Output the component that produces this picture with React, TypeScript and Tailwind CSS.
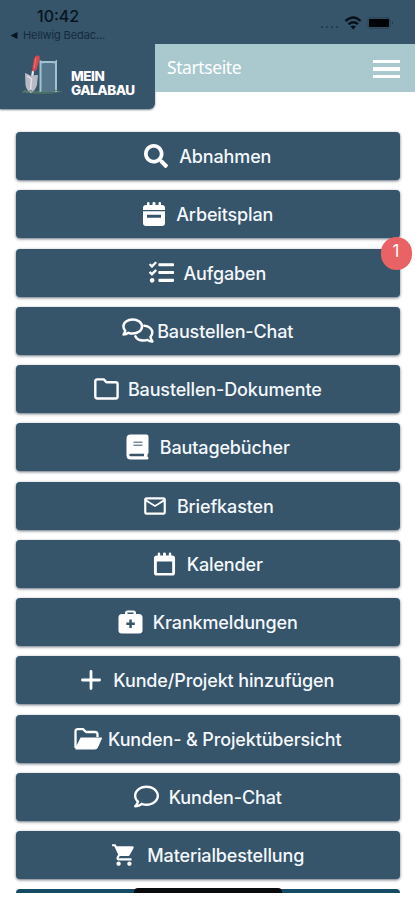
import type { ReactNode } from "react";
import { FaSearch, FaTasks, FaRegComment } from "react-icons/fa";
import { MdMailOutline, MdShoppingCart } from "react-icons/md";

type Row = { label: string; icon: ReactNode; gap: string; badge?: number };

function CalendarIcon({ event = false }: { event?: boolean }) {
  return (
    <svg viewBox="0 0 24 26" className={event ? "h-[26px] w-6" : "h-[26px] w-[23px]"} fill="currentColor">
      <path d="M5 2q0-1 1.200-1T7.500 2v2h3V2q0-1 1.500-1t1.500 1v2h3V2q0-1 1.300-1T19 2v2h1q3 0 3 3v2H1V7q0-3 3-3h1z" />
      {event ? (
        <path fillRule="evenodd" d="M1 10.200h22V22q0 3-3 3H4q-3 0-3-3zM5 13.800v3h14v-3z" />
      ) : (
        <path fillRule="evenodd" d="M1 8h22v14q0 3-3 3H4q-3 0-3-3zM4 10.300v12h16v-12z" />
      )}
    </svg>
  );
}

function ChatsIcon() {
  return (
    <svg viewBox="0 0 32 26" className="h-[26px] w-8" fill="none" stroke="currentColor" strokeWidth="2.500" strokeLinejoin="round" strokeLinecap="round">
      <path d="M3.200 12.600C1.900 11.200 1.400 9.900 1.400 8.500c0-3.900 4.100-7 9.300-7s9.300 3.100 9.300 7-4.200 7.100-9.300 7.100c-1.600 0-3-.3-4.200-.8-1.500 1.100-3.100 1.700-4.900 1.700.9-1.200 1.500-2.400 1.600-3.900z" />
      <path d="M22.300 7.800c4.600.2 8 3 8 6.800 0 1.700-.6 3-1.800 4.200.2 1.700.9 3.100 1.900 4.600-1.900 0-3.500-.5-4.900-1.500-1.300.5-2.600.7-4 .7-3.900 0-7-1.700-8.100-4.300" />
    </svg>
  );
}

function FolderIcon() {
  return (
    <svg viewBox="0 0 25 22" className="h-[22px] w-[25px]" fill="none" stroke="currentColor" strokeWidth="2.400" strokeLinejoin="round">
      <path d="M3.200 1.400h6.600l2.600 2.900h9.200q2 0 2 2v12.200q0 2-2 2H3.200q-1.900 0-1.900-2V3.300q0-1.900 1.900-1.900z" />
    </svg>
  );
}

function BookIcon() {
  return (
    <svg viewBox="0 0 23 26" className="h-[26px] w-[23px]" fill="currentColor">
      <path fillRule="evenodd" d="M4.500.5h16q2 0 2 2v16q0 1.300-1 1.800v2.500q1 .3 1 1.200 0 1.500-1.500 1.500H4.500q-4 0-4-4v-17q0-4 4-4zM4.500 19.800q-1.200 0-1.200 1.200t1.200 1.200H18v-2.400z" />
      <path d="M7.500 8.200h9M7.500 11.300h9" stroke="#7b8c99" strokeWidth="1.500" />
    </svg>
  );
}

function MedkitIcon() {
  return (
    <svg viewBox="0 0 25 24" className="h-6 w-[25px]" fill="currentColor">
      <path fillRule="evenodd" d="M7 4V3q0-2.500 2.500-2.500h6Q18 .5 18 3v1h3q3.500 0 3.500 3.500v12.800q0 3.200-3.200 3.200H3.700Q.5 23.500.5 20.300V7.500Q.5 4 4 4zm2.500 0h6V2.600h-6zM11.300 9.500v3H8.300v2.500h3v3h2.500v-3h3v-2.500h-3v-3z" />
    </svg>
  );
}

function PlusIcon() {
  return (
    <svg viewBox="0 0 20 20" className="size-5" stroke="currentColor" strokeWidth="2.800" strokeLinecap="round">
      <path d="M10 1.400v17.200M1.400 10h17.200" />
    </svg>
  );
}

function OpenFolderIcon() {
  return (
    <svg viewBox="0 0 29 22" className="h-[22px] w-[29px]" fill="none" stroke="currentColor" strokeWidth="2.300" strokeLinejoin="round">
      <path d="M1.500 20V3.200q0-2 2-2h5.500L12 4h9q2.500 0 2.500 2.500V9" />
      <path d="M2 20 7 10h20.500l-4 9q-.8 2-2.500 2H2z" fill="currentColor" strokeWidth="1.200" />
    </svg>
  );
}

const rows: Row[] = [
  { label: "Abnahmen", gap: "gap-[11px]", icon: <FaSearch className="size-6" /> },
  { label: "Arbeitsplan", gap: "gap-2.5", icon: <CalendarIcon event /> },
  { label: "Aufgaben", gap: "gap-[9px]", icon: <FaTasks className="size-[25px]" />, badge: 1 },
  { label: "Baustellen-Chat", gap: "gap-[3px]", icon: <ChatsIcon /> },
  { label: "Baustellen-Dokumente", gap: "gap-[9px]", icon: <FolderIcon /> },
  { label: "Bautagebücher", gap: "gap-[11px]", icon: <BookIcon /> },
  { label: "Briefkasten", gap: "gap-[9px]", icon: <MdMailOutline className="size-[26px]" /> },
  { label: "Kalender", gap: "gap-[11px]", icon: <CalendarIcon /> },
  { label: "Krankmeldungen", gap: "gap-2.5", icon: <MedkitIcon /> },
  { label: "Kunde/Projekt hinzufügen", gap: "gap-3", icon: <PlusIcon /> },
  { label: "Kunden- & Projektübersicht", gap: "gap-[5px]", icon: <OpenFolderIcon /> },
  { label: "Kunden-Chat", gap: "gap-2.5", icon: <FaRegComment className="size-[25px]" /> },
  { label: "Materialbestellung", gap: "gap-2.5", icon: <MdShoppingCart className="size-[26px]" /> },
];

function MenuRow({ row }: { row: Row }) {
  return (
    <button className={`relative flex h-12 w-full shrink-0 items-center justify-center rounded bg-[#36546a] text-white shadow-[0_1px_3px_rgba(20,35,55,0.65)] ${row.gap}`}>
      {row.icon}
      <span className="whitespace-nowrap pt-0.5 text-[18px] font-[450] leading-6 tracking-[-0.14px] text-[#f4f8fc]">{row.label}</span>
      {row.badge && (
        <span className="absolute -right-3 -top-3 flex h-[33px] w-[31px] items-center justify-center rounded-full bg-[#e96265] pb-0.5 text-[17px]">
          {row.badge}
        </span>
      )}
    </button>
  );
}

function Logo() {
  return (
    <svg viewBox="0 0 44 46" className="h-[46px] w-11 shrink-0">
      <path d="M1 39q8-3 15-1 9-2 15-1 6-1 12 2-20 4-42 0" fill="#4b7067" />
      <path d="M20 8h17v31H20z" fill="#56768b" />
      <path d="M20.500 39V8.500q2 1 3 .5h9q2 .5 3.500-.5V39" fill="none" stroke="#9fc4cf" strokeWidth="2" />
      <path d="M13 18 11.500 29" stroke="#e5e9ed" strokeWidth="2.200" />
      <path d="M5 20q3 1 6 3 3-1 7-1l-1 10q-2 6-6 8-5-3-5.500-8z" fill="#b7bac4" />
      <path d="m7 23 4.500 3-1 11" fill="none" stroke="#dfe1e6" strokeWidth="1.500" />
      <path d="M12 18 14 6q1-4 4-3.500 2.500.5 1.500 4L17 15q-1 4-5 3" fill="#d9494b" />
      <path d="m16 5-2 10" stroke="#f07370" />
      <path d="m3 40 2-3 2 3 4-3 2 3m8-1 2-2 2 2m9 0 2-2 2 2" fill="none" stroke="#5d8072" />
    </svg>
  );
}

export default function App() {
  return (
    <div className="flex h-[900px] w-[415px] flex-col overflow-hidden bg-white font-['Inter',sans-serif]">
      <header className="h-[109px] shrink-0">
        <div className="flex h-11 justify-between bg-[#36546a] text-[#071420]">
          <div className="pl-[10px] pt-2">
            <div className="pl-[27px] text-[16px] font-medium leading-4">10:42</div>
            <div className="mt-[5px] flex items-center gap-[5px] text-[11px] leading-3">
              <svg viewBox="0 0 8 8" className="h-[7px] w-2" fill="currentColor"><path d="M0 4 8 0v8z" /></svg>
              <span className="tracking-[-0.1px] text-[#142b3d]">Hellwig Bedac...</span>
            </div>
          </div>
          <div className="flex pt-4 pr-[20px]">
            <svg viewBox="0 0 76 16" className="h-4 w-[76px]">
              <g fill="#20394b"><circle cx="3" cy="11" r="1.100" /><circle cx="8" cy="11" r="1.100" /><circle cx="13" cy="11" r="1.100" /><circle cx="18" cy="11" r="1.100" /></g>
              <g fill="none" stroke="#08111a" strokeWidth="2.400"><path d="M26.500 5q8-7 15 0M29.500 8.200q5-4 9.500 0" /></g>
              <path d="m31.500 10.500 2.700 3 2.800-3q-2.800-2-5.500 0" fill="#08111a" />
              <rect x="49" y="1.800" width="22" height="10.500" rx="2.500" fill="none" stroke="#2a4356" />
              <rect x="50" y="3" width="20" height="8" rx="1" fill="#010407" />
              <path d="M73 5q2 2 0 4" fill="#20394b" />
            </svg>
          </div>
        </div>
        <div className="flex items-start">
          <div className="flex h-[65px] w-[155px] shrink-0 gap-[7px] rounded-br-md bg-[#36546a] pl-5 pt-[9px] shadow-[0_1px_2px_rgba(20,45,65,0.6)]">
            <Logo />
            <div className="flex flex-col pt-[17px] text-[13.5px] font-extrabold leading-[13.5px] tracking-[-0.48px] text-white">
              <span>MEIN</span>
              <span>GALABAU</span>
            </div>
          </div>
          <div className="flex h-12 grow items-center justify-between bg-[#a9c9cf] pl-3 pr-[15px]">
            <span className="pb-0.5 font-['Noto_Sans',sans-serif] text-[17.5px] leading-6 tracking-[-0.4px] text-white">Startseite</span>
            <div className="flex w-[27px] flex-col gap-1 pt-0.5">
              <span className="h-[3.5px] bg-white" /><span className="h-[3.5px] bg-white" /><span className="h-[3.5px] bg-white" />
            </div>
          </div>
        </div>
      </header>
      <main className="flex h-[784px] shrink-0 flex-col gap-[10.25px] overflow-hidden pl-4 pr-[15.5px] pt-[23px]">
        {rows.map((row) => <MenuRow key={row.label} row={row} />)}
        <div className="flex h-12 shrink-0 items-start justify-center rounded bg-[#164b65]">
          <div className="h-[5px] w-[148px] -translate-y-px rounded-t bg-[#080c0f]" />
        </div>
      </main>
    </div>
  );
}
